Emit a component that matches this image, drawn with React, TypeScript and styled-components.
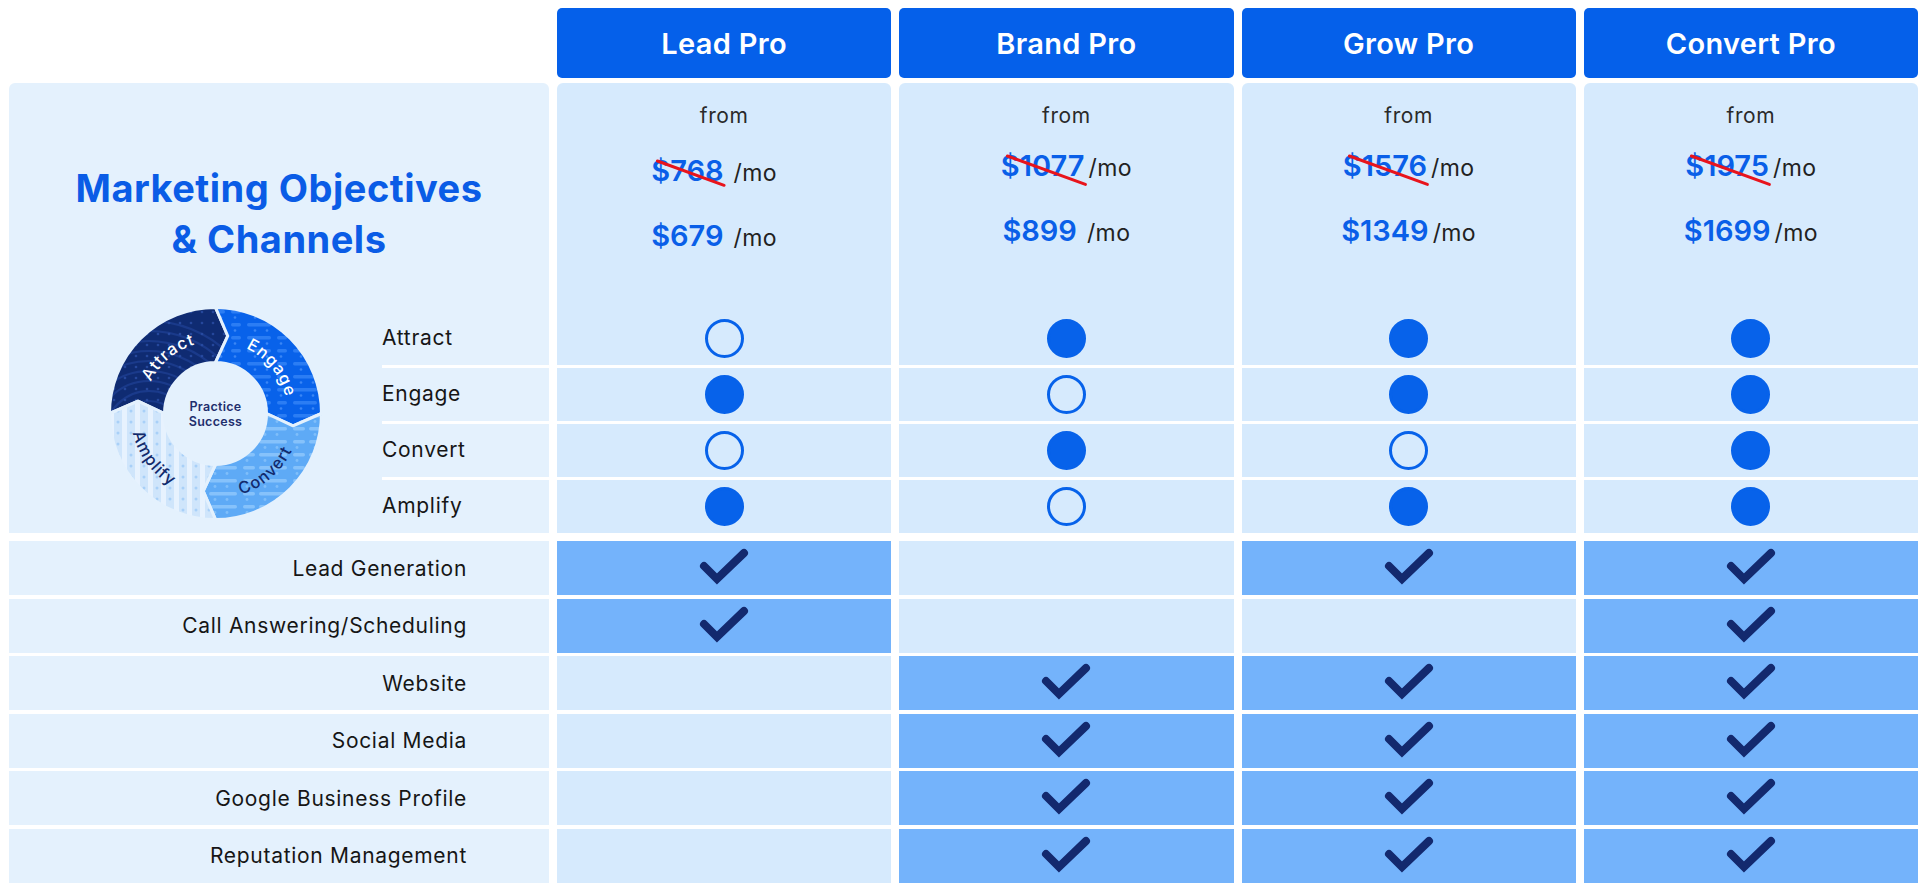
import React from "react";
import styled, { createGlobalStyle } from "styled-components";

const FONT = `"Inter", "Open Sans", "Liberation Sans", sans-serif`;

const GlobalStyle = createGlobalStyle`
  html, body {
    margin: 0;
    padding: 0;
    background: #ffffff;
  }
  body {
    font-family: ${FONT};
    color: #1a1a1a;
  }
  * {
    box-sizing: border-box;
  }
`;

const plans = [
  { name: "Lead Pro", old: "$768", price: "$679", gaps: [10, 10], shift: 5, dx: 20 },
  { name: "Brand Pro", old: "$1077", price: "$899", gaps: [4, 10], shift: 0, dx: 0 },
  { name: "Grow Pro", old: "$1576", price: "$1349", gaps: [4, 4], shift: 0, dx: 0 },
  { name: "Convert Pro", old: "$1975", price: "$1699", gaps: [4, 4], shift: 0, dx: 0 },
];

const objectives = [
  { label: "Attract", marks: [0, 1, 1, 1] },
  { label: "Engage", marks: [1, 0, 1, 1] },
  { label: "Convert", marks: [0, 1, 0, 1] },
  { label: "Amplify", marks: [1, 0, 1, 1] },
];

const channels = [
  { label: "Lead Generation", marks: [1, 0, 1, 1] },
  { label: "Call Answering/Scheduling", marks: [1, 0, 0, 1] },
  { label: "Website", marks: [0, 1, 1, 1] },
  { label: "Social Media", marks: [0, 1, 1, 1] },
  { label: "Google Business Profile", marks: [0, 1, 1, 1] },
  { label: "Reputation Management", marks: [0, 1, 1, 1] },
];

const Page = styled.div`
  width: 1920px;
  height: 890px;
  padding: 8px 2px 0 9px;
  display: flex;
  flex-direction: column;
  overflow: hidden;
`;

const Grid = styled.div`
  display: grid;
  grid-template-columns: 540px repeat(4, 1fr);
  column-gap: 8px;
`;

const HeaderRow = styled(Grid)`
  height: 70px;
  margin-bottom: 5px;
`;

const PlanHead = styled.div`
  background: #0560ea;
  border-radius: 5px;
  display: flex;
  align-items: center;
  justify-content: center;
  color: #ffffff;
  font-size: 29px;
  font-weight: 600;
  letter-spacing: 0.3px;
`;

const ObjectiveGrid = styled(Grid)`
  grid-template-rows: 282px repeat(3, 53px);
  row-gap: 3px;
`;

const LeftPanel = styled.div`
  grid-row: 1 / 5;
  grid-column: 1;
  background: #e4f1fd;
  border-radius: 6px 6px 0 0;
  display: flex;
  flex-direction: column;
`;

const Title = styled.h1`
  margin: 0;
  padding-top: 80px;
  text-align: center;
  color: #0a5ce6;
  font-size: 38px;
  font-weight: 700;
  letter-spacing: 0.5px;
  line-height: 51px;
`;

const PanelBody = styled.div`
  margin-top: auto;
  display: flex;
  align-items: flex-end;
`;

const RingBox = styled.div`
  width: 213px;
  height: 213px;
  margin: 0 0 13px 100px;
`;

const Labels = styled.div`
  margin-left: auto;
  width: 167px;
  display: flex;
  flex-direction: column;
`;

const ObjectiveLabel = styled.div`
  height: 53px;
  display: flex;
  align-items: center;
  padding-bottom: 2px;
  font-size: 21px;
  letter-spacing: 0.7px;
  color: #161616;

  & + & {
    height: 56px;
    border-top: 3px solid #ffffff;
  }
`;

const PriceBlock = styled.div<{ $shift: number }>`
  background: #d6eafd;
  border-radius: 6px 6px 0 0;
  display: flex;
  flex-direction: column;
  align-items: center;
  padding-top: 21px;

  & > div:nth-child(2) {
    margin-top: ${(p) => 20 + p.$shift}px;
  }
  & > div:nth-child(3) {
    margin-top: 29px;
  }
`;

const From = styled.div`
  font-size: 21px;
  letter-spacing: 0.6px;
  line-height: 24px;
  color: #2a2a2a;
`;

const PriceLine = styled.div<{ $gap: number; $dx: number }>`
  display: flex;
  align-items: baseline;
  gap: ${(p) => p.$gap}px;
  height: 36px;
  line-height: 36px;
  margin-right: ${(p) => p.$dx}px;
`;

const Amount = styled.span`
  position: relative;
  color: #0a5fe8;
  font-size: 29px;
  font-weight: 600;
`;

const Strike = styled.span`
  position: absolute;
  left: 5px;
  top: 6px;
  width: calc(100% + 2px);
  height: 3px;
  background: #e8141c;
  border-radius: 2px;
  transform-origin: left center;
  transform: rotate(20deg);
`;

const PerMonth = styled.span`
  font-size: 23px;
  letter-spacing: 0.4px;
  color: #222222;
`;

const AttractCell = styled.div`
  margin-top: auto;
  height: 53px;
  width: 100%;
  display: flex;
  align-items: center;
  justify-content: center;
`;

const Cell = styled.div<{ $on?: boolean }>`
  background: ${(p) => (p.$on ? "#74b3fb" : "#d6eafd")};
  display: flex;
  align-items: center;
  justify-content: center;
`;

const Dot = styled.span<{ $filled: boolean }>`
  width: 39px;
  height: 39px;
  border-radius: 50%;
  border: 3px solid #0762ea;
  background: ${(p) => (p.$filled ? "#0762ea" : "transparent")};
`;

const ChannelGrid = styled(Grid)`
  grid-template-rows: repeat(6, 54px);
  row-gap: 3.6px;
  margin-top: 8px;
`;

const ChannelLabel = styled.div`
  background: #e4f1fd;
  display: flex;
  align-items: center;
  justify-content: flex-end;
  padding-right: 82px;
  font-size: 21px;
  letter-spacing: 0.7px;
  color: #161616;

  &:last-of-type {
    border-radius: 0 0 6px 6px;
  }
`;

const Check = () => (
  <svg width="50" height="40" viewBox="0 0 50 40">
    <path
      d="M5 18 L18 31 L45 5"
      fill="none"
      stroke="#13296e"
      strokeWidth="8"
      strokeLinecap="round"
      strokeLinejoin="miter"
    />
  </svg>
);

// ring geometry
const C = 106.5;
const R = 106;
const r = 51;
const RM = 78.5;

const pt = (rad: number, deg: number) => {
  const a = (deg * Math.PI) / 180;
  return `${(C + rad * Math.cos(a)).toFixed(2)} ${(C + rad * Math.sin(a)).toFixed(2)}`;
};

const segPath = (a0: number, a1: number, d = 9) =>
  `M ${pt(R, a0)} A ${R} ${R} 0 0 1 ${pt(R, a1)} L ${pt(RM, a1 + d)} L ${pt(r, a1)} ` +
  `A ${r} ${r} 0 0 0 ${pt(r, a0)} L ${pt(RM, a0 + d)} Z`;

const arc = (rad: number, from: number, to: number, sweep: 0 | 1) =>
  `M ${pt(rad, from)} A ${rad} ${rad} 0 0 ${sweep} ${pt(rad, to)}`;

const segments = [
  { id: "attract", a0: 180, a1: 270, fill: "#0f2b72", pat: "url(#pAttract)", text: "Attract", color: "#ffffff", path: arc(72, 184, 276, 1) },
  { id: "engage", a0: 270, a1: 360, fill: "#0862ea", pat: "url(#pEngage)", text: "Engage", color: "#ffffff", path: arc(72, 275, 367, 1) },
  { id: "convert", a0: 0, a1: 90, fill: "#5eaaf6", pat: "url(#pConvert)", text: "Convert", color: "#122a6c", path: arc(85, 95, 3, 0) },
  { id: "amplify", a0: 90, a1: 180, fill: "#cfe5fb", pat: "url(#pAmplify)", text: "Amplify", color: "#122a6c", path: arc(85, 190, 98, 0) },
];

const Ring = () => (
  <svg width="213" height="213" viewBox="0 0 213 213">
    <defs>
      <pattern id="pAttract" patternUnits="userSpaceOnUse" width="213" height="213">
        {[14, 24, 34, 44, 54, 64, 74, 84, 94, 104, 114].map((rr) => (
          <circle key={rr} cx="40" cy="128" r={rr} fill="none" stroke="#1d3e92" strokeWidth="2.2" opacity="0.75" />
        ))}
      </pattern>
      <pattern id="pDotsDark" patternUnits="userSpaceOnUse" width="11" height="11">
        <circle cx="5" cy="5" r="1.3" fill="#2a4ea6" />
      </pattern>
      <pattern id="pEngage" patternUnits="userSpaceOnUse" width="46" height="13">
        <rect x="0" y="3" width="24" height="3.5" rx="1.7" fill="#2b7df4" />
        <rect x="30" y="3" width="10" height="3.5" rx="1.7" fill="#2b7df4" />
        <circle cx="8" cy="10.5" r="1.3" fill="#3a86f5" />
        <circle cx="20" cy="10.5" r="1.3" fill="#3a86f5" />
        <circle cx="34" cy="10.5" r="1.3" fill="#3a86f5" />
      </pattern>
      <pattern id="pConvert" patternUnits="userSpaceOnUse" width="50" height="13">
        <rect x="0" y="3" width="28" height="3.5" rx="1.7" fill="#86c2fb" />
        <rect x="34" y="3" width="12" height="3.5" rx="1.7" fill="#86c2fb" />
        <circle cx="6" cy="10.5" r="1.4" fill="#7fbefa" />
        <circle cx="18" cy="10.5" r="1.4" fill="#7fbefa" />
        <circle cx="38" cy="10.5" r="1.4" fill="#7fbefa" />
      </pattern>
      <pattern id="pAmplify" patternUnits="userSpaceOnUse" width="13" height="11">
        <rect x="0" y="0" width="5" height="11" fill="#eaf4fe" opacity="0.9" />
        <circle cx="9" cy="5" r="1.5" fill="#a8d0f8" />
      </pattern>
    </defs>
    {segments.map((s) => {
      const d = segPath(s.a0, s.a1);
      return (
        <g key={s.id}>
          <path d={d} fill={s.fill} />
          <path d={d} fill={s.pat} />
          {s.id === "attract" && <path d={d} fill="url(#pDotsDark)" opacity="0.8" />}
          <path d={d} fill="none" stroke="#e4f1fd" strokeWidth="3" strokeLinejoin="round" />
          <path id={`tp-${s.id}`} d={s.path} fill="none" />
          <text fill={s.color} fontSize="16.5" fontWeight="500" letterSpacing="1" fontFamily={FONT}>
            <textPath href={`#tp-${s.id}`} startOffset="50%" textAnchor="middle">
              {s.text}
            </textPath>
          </text>
        </g>
      );
    })}
    <text x={C} y="103.5" textAnchor="middle" fontSize="12.5" fontWeight="600" letterSpacing="0.3" fill="#1f2f6d" fontFamily={FONT}>
      Practice
    </text>
    <text x={C} y="118.5" textAnchor="middle" fontSize="12.5" fontWeight="600" letterSpacing="0.3" fill="#1f2f6d" fontFamily={FONT}>
      Success
    </text>
  </svg>
);

export default function App() {
  return (
    <>
      <GlobalStyle />
      <Page>
        <HeaderRow>
          <div />
          {plans.map((p) => (
            <PlanHead key={p.name}>{p.name}</PlanHead>
          ))}
        </HeaderRow>

        <ObjectiveGrid>
          <LeftPanel>
            <Title>
              Marketing Objectives
              <br />& Channels
            </Title>
            <PanelBody>
              <RingBox>
                <Ring />
              </RingBox>
              <Labels>
                {objectives.map((o) => (
                  <ObjectiveLabel key={o.label}>{o.label}</ObjectiveLabel>
                ))}
              </Labels>
            </PanelBody>
          </LeftPanel>

          {plans.map((p, i) => (
            <PriceBlock key={p.name} $shift={p.shift}>
              <From>from</From>
              <PriceLine $gap={p.gaps[0]} $dx={p.dx}>
                <Amount>
                  {p.old}
                  <Strike />
                </Amount>
                <PerMonth>/mo</PerMonth>
              </PriceLine>
              <PriceLine $gap={p.gaps[1]} $dx={p.dx}>
                <Amount>{p.price}</Amount>
                <PerMonth>/mo</PerMonth>
              </PriceLine>
              <AttractCell>
                <Dot $filled={!!objectives[0].marks[i]} />
              </AttractCell>
            </PriceBlock>
          ))}

          {objectives.slice(1).map((o) =>
            o.marks.map((m, i) => (
              <Cell key={o.label + i}>
                <Dot $filled={!!m} />
              </Cell>
            ))
          )}
        </ObjectiveGrid>

        <ChannelGrid>
          {channels.map((c) => (
            <React.Fragment key={c.label}>
              <ChannelLabel>{c.label}</ChannelLabel>
              {c.marks.map((m, i) => (
                <Cell key={i} $on={!!m}>
                  {m ? <Check /> : null}
                </Cell>
              ))}
            </React.Fragment>
          ))}
        </ChannelGrid>
      </Page>
    </>
  );
}
